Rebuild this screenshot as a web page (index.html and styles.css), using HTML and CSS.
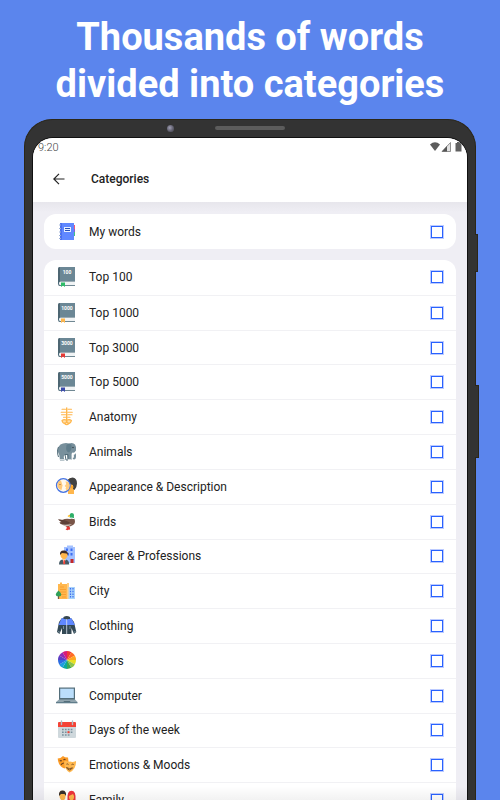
FILE: index.html
```html
<!DOCTYPE html>
<html lang="en">
<head>
<meta charset="utf-8">
<meta name="viewport" content="width=device-width, initial-scale=1">
<title>Categories</title>
<link rel="stylesheet" href="styles.css">
</head>
<body>
<svg class="defs" aria-hidden="true">
  <symbol id="book" viewBox="0 0 24 24">
    <path d="M5 2h15v15H5.500v1.500H3V4q0-2 2-2z" fill="#6b8795"/>
    <path d="M5 2v15q-2 0-2 2V4q0-2 2-2z" fill="#4d6672"/>
    <path d="M3 18.500Q3 16 5 16h15v5H5q-2 0-2-2.500z" fill="#456472"/>
    <path d="M5.500 16.500H20v3.700H5.500Q4 20 4 18.400t1.500-1.900z" fill="#f1f4f5"/>
    <path d="M6 17.500h4V22l-2-1.600L6 22z" fill="currentColor"/>
  </symbol>
</svg>

<h2 class="headline">Thousands of words<br>divided into categories</h2>

<div class="device">
  <span class="camera"></span>
  <span class="speaker"></span>
  <span class="side-button side-button-power"></span>
  <span class="side-button side-button-volume"></span>

  <div class="screen">
    <header class="top">
      <div class="status">
        <span>9:20</span>
        <svg class="status-icons" viewBox="0 0 34 12" aria-hidden="true">
          <path d="M1 3.500Q6 -.8 11 3.500L6 10z" fill="#5c5c5c"/>
          <path d="M13 10.500 21.500 1.500v9z" fill="#e2e2e2" stroke="#777" stroke-width=".8"/>
          <path d="M13 10.500 18 5v5.500z" fill="#555"/>
          <path d="M28 1h3v1h1.500v8.500h-6V2H28z" fill="#606060"/>
        </svg>
      </div>
      <div class="appbar">
        <button class="back" type="button" aria-label="Back">
          <svg viewBox="0 0 12 12" aria-hidden="true"><path d="M11.500 6H1M6 .8 .8 6 6 11.200" fill="none" stroke="#222" stroke-width="1.200"/></svg>
        </button>
        <h1 class="title">Categories</h1>
      </div>
    </header>

    <main class="content">
      <ul class="card">
        <li><label class="row">
          <svg class="icon" viewBox="0 0 24 24" aria-hidden="true">
            <path d="M18 5h2v4h-2z" fill="#f25578"/><path d="M18 9h2v3h-2z" fill="#8e5bd0"/><path d="M18 12h2v4h-2z" fill="#3fc38a"/>
            <path d="M5 3h14v17H5z" fill="#6088ff"/><path d="M5 3h2v17H5z" fill="#4b70ef"/>
            <path d="M4 5h2M4 8.500h2M4 12h2M4 15.500h2M4 18.500h2" stroke="#9db2d8"/>
            <path d="M9 7h7v5H9z" fill="#e8f0ff"/><path d="M10 8.500h5M10 10.500h5" stroke="#2850b8"/>
          </svg>
          <span class="name">My words</span><input class="check" type="checkbox"></label></li>
      </ul>

      <ul class="card card-list">
        <li><label class="row">
          <svg class="icon book-green" viewBox="0 0 24 24" aria-hidden="true"><use href="#book"/><text class="book-number" x="12" y="9">100</text></svg>
          <span class="name">Top 100</span><input class="check" type="checkbox"></label></li>
        <li><label class="row">
          <svg class="icon book-amber" viewBox="0 0 24 24" aria-hidden="true"><use href="#book"/><text class="book-number" x="12" y="9">1000</text></svg>
          <span class="name">Top 1000</span><input class="check" type="checkbox"></label></li>
        <li><label class="row">
          <svg class="icon book-red" viewBox="0 0 24 24" aria-hidden="true"><use href="#book"/><text class="book-number" x="12" y="9">3000</text></svg>
          <span class="name">Top 3000</span><input class="check" type="checkbox"></label></li>
        <li><label class="row">
          <svg class="icon book-blue" viewBox="0 0 24 24" aria-hidden="true"><use href="#book"/><text class="book-number" x="12" y="9">5000</text></svg>
          <span class="name">Top 5000</span><input class="check" type="checkbox"></label></li>
        <li><label class="row">
          <svg class="icon" viewBox="0 0 24 24" aria-hidden="true">
            <g fill="none" stroke="#ffb74d" stroke-linecap="round">
              <path d="M11.700 3v12" stroke-width="1.400"/>
              <path d="M7 4.300h3.500M13 4.300h3.500M6.200 7.200h4.600M12.700 7.200h4.600M6.500 9.800h4.300M12.700 9.800H17M8.500 12.200h2.300M12.700 12.200H15" stroke-width="1.100"/>
              <path d="M11.700 15.200Q9 13.800 7 15.500q.5 2.700 3 3 1.700-1 1.700-3.300 0 2.300 1.700 3.300 2.500-.3 3-3-2-1.700-4.700-.3" fill="#ffe0ac" stroke-width="1.200"/>
              <path d="M9.500 18.300q2.200 2.600 4.400 0" stroke-width="1.400"/>
            </g>
          </svg>
          <span class="name">Anatomy</span><input class="check" type="checkbox"></label></li>
        <li><label class="row">
          <svg class="icon" viewBox="0 0 24 24" aria-hidden="true">
            <path d="M3 12Q2 5 8 3.500q3-1 6 0 4-1.500 6 1 1.500 2 1 6v6q0 3-2 3-1.500 0-1.300-1.700 1.200.5 1.200-1.500l-.3-3-2 .2v6.500h-3.800L12 15H9.500l-.8 2 .8 3.500H5L4.300 15z" fill="#78909c"/>
            <path d="M3.500 7Q2 9 2.700 14l.8 3M10 14.500h3v5.500h-2z" fill="none" stroke="#526d79"/>
            <path d="M11.500 5q3-2.500 5 0 1 5-2.500 7.500Q10 12 11.500 5z" fill="#607d8b"/>
            <path d="M17 12.500q3 .8 3.500-2l.7 2q-.8 3-4.200 2z" fill="#fff"/>
            <path d="M5 19.500h4M12.700 19.500h4" stroke="#cfd8dc"/>
            <circle cx="18" cy="7.500" r=".7" fill="#263238"/>
          </svg>
          <span class="name">Animals</span><input class="check" type="checkbox"></label></li>
        <li><label class="row">
          <svg class="icon" viewBox="0 0 24 24" aria-hidden="true">
            <path d="M12 14V7q1-4 5-4Q20.500 3.500 20.500 9L19 15v4h-6v-2.500z" fill="#ffb74d"/>
            <path d="M12.500 5q2-2.500 5-2.500 4.500.5 4.500 6 0 3.500-2.500 6.500l-1.500-1V10Q14 9.500 12.500 5z" fill="#424242"/>
            <circle cx="17" cy="12" r="1.500" fill="#ffa726"/>
            <circle cx="8.300" cy="10.500" r="6.800" fill="#fff8eb" stroke="#4573e3" stroke-width="1.300"/>
            <path d="M2.500 9Q3 5.500 6 5.500l1.500 5L6.500 15Q3 14 2.500 11z" fill="#ffc878"/>
            <path d="M10.500 6.500q4-.5 4 4t-3 5l-1-2 .7-1-1.500-1.500 1.500-2z" fill="#ffcc80"/>
            <circle cx="5" cy="9.500" r=".6" fill="#795548"/>
          </svg>
          <span class="name">Appearance &amp; Description</span><input class="check" type="checkbox"></label></li>
        <li><label class="row">
          <svg class="icon" viewBox="0 0 24 24" aria-hidden="true">
            <path d="M10.500 15.500 12 18l-1.500 1.500 2 .7 1.500-.7 1 .3v-2L13.500 15z" fill="#e53935"/>
            <path d="M3 9.500l4 .5q4-2 8-1l1.500-.5 3 .5q1.500 4-1.500 6-5 3-9.500 0Q5 14 4.500 12.500l2-.3z" fill="#795548"/>
            <path d="M3 9.500q6-.5 12 3-2.500 3-7 2-3-1-3.500-2l3-.2z" fill="#5d4037"/>
            <path d="M7 14.500q5 .5 10-.5-3.500 3-7.500 2z" fill="#c8bfb8"/>
            <path d="M14.500 8q1-1 .3-2.300-.3-2.700 2.200-2.700 2.300.2 2 2.500-.5 1.500.3 3.200z" fill="#2eaf68"/>
            <path d="M14.700 8.200q2-.5 4.500.5" stroke="#fff" fill="none"/>
            <path d="M14.800 4.700 12.500 6q.5 1 2.500.5z" fill="#ffb300"/>
          </svg>
          <span class="name">Birds</span><input class="check" type="checkbox"></label></li>
        <li><label class="row">
          <svg class="icon" viewBox="0 0 24 24" aria-hidden="true">
            <path d="M9 3h3V1.500h6V3h2v16H9z" fill="#a3c1ff"/>
            <path d="M11 4.500h2v2.500h-2zM15.500 4.500h2v2.500h-2zM15.500 9h2v2.500h-2zM12 9h2v2.500h-2z" fill="#3d6df2"/>
            <path d="M15.500 15h3v4h-3z" fill="#c62828"/>
            <path d="M4 20.500q0-4.500 3.500-5l1.500-.5 1.500.5q3.700.5 3.700 5z" fill="#455a64"/>
            <path d="M7.500 15h3.200l-1.600 5.500z" fill="#fff"/><path d="M8.600 16h1.200l.5 3.500-1.200 1-1-1z" fill="#f44336"/>
            <path d="M5.500 9Q9 6 12.500 9q.5 4-1.700 5.500L9 16l-1.800-1.500Q5 13 5.500 9z" fill="#ffb74d"/>
            <path d="M5 11Q4.500 6.500 8.500 6.500q4.500-.5 4.500 4.500l-1.500-1.500-4.500-.5z" fill="#3e2c28"/>
          </svg>
          <span class="name">Career &amp; Professions</span><input class="check" type="checkbox"></label></li>
        <li><label class="row">
          <svg class="icon" viewBox="0 0 24 24" aria-hidden="true">
            <path d="M3 5h2V3.500h2V5h5v2.500h2V20H3z" fill="#ffb74d"/><path d="M12 4h2v16h-2z" fill="#ffcc80"/>
            <path d="M5 8h4M5 10.500h6M5 13h6M6 15.500h5M7 18h4" stroke="#f79a2b" stroke-width=".8"/>
            <path d="M13.500 8H20v12h-6.500z" fill="#a9d3fa"/>
            <path d="M15.500 9v10M18 9v10" stroke="#3d6df2" stroke-dasharray="1.500 1.200" stroke-width="1.200"/>
            <path d="M3.500 15v5" stroke="#795548" stroke-width="1.300"/>
            <path d="M3.500 11.500q2.800 2.500 2.800 4.300t-2.800 1.700T.8 15.800q.2-2 2.700-4.300z" fill="#2e9f58"/>
          </svg>
          <span class="name">City</span><input class="check" type="checkbox"></label></li>
        <li><label class="row">
          <svg class="icon" viewBox="0 0 24 24" aria-hidden="true">
            <path d="M7 4 4 8 2 18l2.500 2 2.500-6v6h9.500v-6l2.500 6 2.300-2L19 8l-3-4z" fill="#344955"/>
            <path d="M6.500 4.500Q11.500 2 16.500 4.500L20 11H3.500z" fill="#6088ff"/>
            <path d="M8.500 3Q11.700 1 15 3v2h-2l-1.300 1L10.500 5h-2z" fill="#37474f"/>
            <path d="M11.700 5v15" stroke="#dce5ef" stroke-width=".8"/>
            <path d="M8.500 12v3M15 12v3M3 17.500l2 .8M20.500 17.500l-2 .8" stroke="#78909c"/>
          </svg>
          <span class="name">Clothing</span><input class="check" type="checkbox"></label></li>
        <li><label class="row">
          <svg class="icon" viewBox="0 0 24 24" aria-hidden="true">
            <g fill="none" stroke-width="9" stroke-dasharray="1 11">
              <circle cx="12" cy="11" r="4.500" pathLength="12" stroke="#e8df22"/>
              <circle cx="12" cy="11" r="4.500" pathLength="12" stroke="#8bc34a" stroke-dashoffset="-1"/>
              <circle cx="12" cy="11" r="4.500" pathLength="12" stroke="#39a853" stroke-dashoffset="-2"/>
              <circle cx="12" cy="11" r="4.500" pathLength="12" stroke="#0aa99b" stroke-dashoffset="-3"/>
              <circle cx="12" cy="11" r="4.500" pathLength="12" stroke="#1d9de0" stroke-dashoffset="-4"/>
              <circle cx="12" cy="11" r="4.500" pathLength="12" stroke="#2d6be0" stroke-dashoffset="-5"/>
              <circle cx="12" cy="11" r="4.500" pathLength="12" stroke="#5b3fc4" stroke-dashoffset="-6"/>
              <circle cx="12" cy="11" r="4.500" pathLength="12" stroke="#8e2bb5" stroke-dashoffset="-7"/>
              <circle cx="12" cy="11" r="4.500" pathLength="12" stroke="#d81b7a" stroke-dashoffset="-8"/>
              <circle cx="12" cy="11" r="4.500" pathLength="12" stroke="#f03a37" stroke-dashoffset="-9"/>
              <circle cx="12" cy="11" r="4.500" pathLength="12" stroke="#ff6a24" stroke-dashoffset="-10"/>
              <circle cx="12" cy="11" r="4.500" pathLength="12" stroke="#ffa51f" stroke-dashoffset="-11"/>
            </g>
          </svg>
          <span class="name">Colors</span><input class="check" type="checkbox"></label></li>
        <li><label class="row">
          <svg class="icon" viewBox="0 0 24 24" aria-hidden="true">
            <path d="M4 3.500h16V16H4z" fill="#546e7a"/><path d="M5.200 4.700h13.600V14H5.200z" fill="#bbdefb"/>
            <path d="M4 15.500h16l2.500 2.500H1z" fill="#90a4ae"/><path d="M1 18h21.500v1.300H1z" fill="#607d8b"/>
            <path d="M9 17h6l.5 1h-7z" fill="#546e7a"/>
          </svg>
          <span class="name">Computer</span><input class="check" type="checkbox"></label></li>
        <li><label class="row">
          <svg class="icon" viewBox="0 0 24 24" aria-hidden="true">
            <path d="M3 8h18v11q0 1-1 1H4q-1 0-1-1z" fill="#cfd8dc"/><path d="M4 4h16q1 0 1 1v4H3V5q0-1 1-1z" fill="#f44336"/>
            <path d="M6.500 3v3.500M17.500 3v3.500" stroke="#b0bec5" stroke-width="1.400" stroke-linecap="round"/>
            <path d="M7 11.500h10.500M7 14.200h10.500M7 17h8" stroke="#78909c" stroke-width="1.500" stroke-dasharray="1.700 1.200"/>
            <path d="M12.500 13.200h2v2h-2z" fill="#f44336"/>
          </svg>
          <span class="name">Days of the week</span><input class="check" type="checkbox"></label></li>
        <li><label class="row">
          <svg class="icon" viewBox="0 0 24 24" aria-hidden="true">
            <path d="M2.700 5.500Q5.500 5.500 8 3q1.500 1.500 5 1.500l1 7.500-4.500 3.500Q3 13 2.700 5.500z" fill="#fb9b27"/>
            <path d="M4.800 8q1-.8 2 0M8.500 7q1-1 2-.3M6 12q1-2 3-2" fill="none" stroke="#6d4522" stroke-width="1.100"/>
            <path d="M9.500 7.500q3 1.500 5.500 1 2.500 1.200 6-.5.500 8.500-6.500 11.500Q8 15.500 9.500 7.500z" fill="#ffb84f"/>
            <path d="M11.500 11.200q1.200-.7 2 .4M16.500 11.700q1.200-1 2.200-.2M11.500 14.500q3 2.200 6 .3-1.500 2.500-3.200 2.200t-2.800-2.500z" fill="none" stroke="#6d4522" stroke-width=".9"/>
          </svg>
          <span class="name">Emotions &amp; Moods</span><input class="check" type="checkbox"></label></li>
        <li><label class="row">
          <svg class="icon" viewBox="0 0 24 24" aria-hidden="true">
            <path d="M4.500 7Q4 2.700 7.500 2.700T10.500 7q.5 5-3 5.500-3.300-.5-3-5.500z" fill="#ffb74d"/>
            <path d="M4 8q-.5-5.500 3.500-5.500T11 8L9.500 6H6z" fill="#37302d"/>
            <path d="M12.500 12q-.7-9.300 4-9.300T20.500 12z" fill="#ed343b"/>
            <path d="M14 8l4-2 1 2q.5 4-2.500 4.500Q13.500 12 14 8z" fill="#ffb74d"/>
            <path d="M3.500 21q0-7 4-7t4 7zM12.500 21q0-7 4-7t4.500 7z" fill="#3d6df2"/>
          </svg>
          <span class="name">Family</span><input class="check" type="checkbox"></label></li>
      </ul>
    </main>
  </div>
</div>
</body>
</html>
```

FILE: styles.css
```css
* {
  box-sizing: border-box;
}

body {
  margin: 0;
  height: 100vh;
  overflow: hidden;
  display: flex;
  flex-direction: column;
  background: #5b85ed;
  color: #222;
  font-family: Roboto, "Liberation Sans", sans-serif;
  font-size: 12px;
}

.defs {
  position: absolute;
  width: 0;
  height: 0;
}

.headline {
  margin: 0;
  padding: 14px 0 11px;
  color: #fff;
  font-size: 38px;
  font-weight: 700;
  line-height: 47px;
  text-align: center;
}

.device {
  position: relative;
  flex: 1;
  min-height: 0;
  display: flex;
  margin: 0 24px;
  padding: 18px 8px 0;
  background: #333;
  border: 1px solid #2b2618;
  border-bottom: 0;
  border-radius: 28px 28px 0 0;
}

.camera {
  position: absolute;
  top: 5px;
  left: 142px;
  width: 7px;
  height: 7px;
  border-radius: 50%;
  background: radial-gradient(circle at 40% 40%, #a09fb4, #5b5a68 60%);
}

.speaker {
  position: absolute;
  top: 6px;
  left: 50%;
  width: 70px;
  height: 4px;
  margin-left: -35px;
  border-radius: 2px;
  background: #5c5c5c;
}

.side-button {
  position: absolute;
  left: 100%;
  background: #333;
  border: 1px solid #2b2618;
  border-left: 0;
}

.side-button-power {
  top: 114px;
  width: 3px;
  height: 38px;
}

.side-button-volume {
  top: 265px;
  width: 4px;
  height: 73px;
}

.screen {
  position: relative;
  flex: 1;
  min-width: 0;
  overflow: hidden;
  background: #efeef4;
  border-radius: 20px 20px 0 0;
  box-shadow: 0 0 0 1px #111;
}

/* Soft shade over the last visible row */
.screen::after {
  content: "";
  position: absolute;
  inset: auto 0 0;
  height: 14px;
  background: linear-gradient(transparent, rgb(0 0 0 / 5%));
  pointer-events: none;
}

.top {
  background: #fff;
}

.status {
  display: flex;
  align-items: center;
  justify-content: space-between;
  height: 18px;
  padding: 0 4px 0 5px;
  color: #444;
  font-size: 11px;
  font-weight: 300;
}

.status-icons {
  width: 34px;
  height: 12px;
}

.appbar {
  display: flex;
  align-items: center;
  gap: 20px;
  height: 46px;
  padding: 0 14px;
}

.back {
  display: grid;
  place-items: center;
  width: 24px;
  height: 24px;
  padding: 0;
  border: 0;
  background: none;
}

.back svg {
  width: 12px;
  height: 12px;
}

.title {
  margin: 0;
  font-size: 12px;
  font-weight: 500;
}

.content {
  display: grid;
  gap: 11px;
  padding: 12px 11px 0;
  background: linear-gradient(#e7e6ec, #efeef4 10px);
}

.card {
  display: grid;
  min-height: 35px;
  margin: 0;
  padding: 0;
  list-style: none;
  overflow: hidden;
  background: #fff;
  border-radius: 12px;
}

/* Equal rows share the height of the list */
.card-list {
  grid-auto-rows: 1fr;
  min-height: 557px;
}

.card li {
  display: grid;
}

.card li + li {
  border-top: 1px solid #f1f1f4;
}

.row {
  display: flex;
  align-items: center;
  gap: 10px;
  padding: 4px 13px 4px 11px;
}

.icon {
  flex: none;
  width: 24px;
  height: 24px;
}

.name {
  flex: 1;
}

.check {
  appearance: none;
  width: 12px;
  height: 12px;
  margin: 0;
  border: 1px solid #2962ff;
  box-shadow: 0 0 0 1px #bccbff;
}

.check:checked {
  background: #2962ff;
}

.book-number {
  fill: #fff;
  font-size: 5px;
  font-weight: 700;
  text-anchor: middle;
}

.book-green {
  color: #2ebd68;
}

.book-amber {
  color: #ffb74d;
}

.book-red {
  color: #e53935;
}

.book-blue {
  color: #3949ab;
}
```
